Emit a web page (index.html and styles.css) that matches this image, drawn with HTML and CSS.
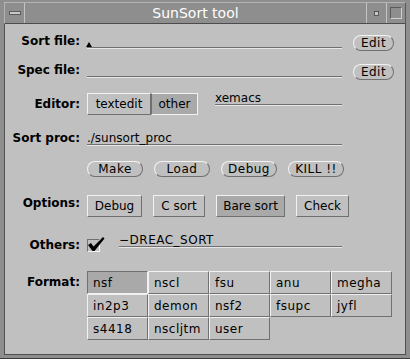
FILE: index.html
```html
<!DOCTYPE html>
<html lang="en">
<head>
    <meta charset="UTF-8">
    <title>SunSort tool</title>
    <link rel="stylesheet" href="styles.css">
</head>
<body>
    <div class="window">
        <!-- Titelleiste -->
        <div class="titlebar">
            <div class="tb-menu"><span class="tb-menu-bar"></span></div>
            <div class="tb-title">SunSort tool</div>
            <div class="tb-min"><span class="tb-min-dot"></span></div>
            <div class="tb-max"><span class="tb-max-box"></span></div>
        </div>

        <div class="panel">
            <div class="row row-sortfile">
                <div class="label">Sort file:</div>
                <div class="field field-wide"><span class="caret"></span></div>
                <button class="pill pill-edit">Edit</button>
            </div>

            <div class="row row-specfile">
                <div class="label">Spec file:</div>
                <div class="field field-wide"></div>
                <button class="pill pill-edit">Edit</button>
            </div>

            <div class="row row-editor">
                <div class="label">Editor:</div>
                <div class="segmented">
                    <button class="seg seg-textedit">textedit</button>
                    <button class="seg seg-other active">other</button>
                </div>
                <div class="field field-editor">xemacs</div>
            </div>

            <div class="row row-sortproc">
                <div class="label">Sort proc:</div>
                <div class="field field-wide">./sunsort_proc</div>
            </div>

            <div class="row row-actions">
                <div class="label"></div>
                <button class="pill pill-action">Make</button>
                <button class="pill pill-action">Load</button>
                <button class="pill pill-action">Debug</button>
                <button class="pill pill-action">KILL !!</button>
            </div>

            <div class="row row-options">
                <div class="label">Options:</div>
                <button class="toggle" style="width: 55px">Debug</button>
                <button class="toggle" style="width: 52px">C sort</button>
                <button class="toggle active" style="width: 69px">Bare sort</button>
                <button class="toggle" style="width: 53px">Check</button>
            </div>

            <div class="row row-others">
                <div class="label">Others:</div>
                <div class="checkbox">
                    <svg class="checkmark" width="17" height="15" viewBox="0 0 17 15">
                        <polygon points="0,8 3,6 5.5,9.5 15,0 16.5,1.5 6.5,14 4.5,14" fill="#000"/>
                    </svg>
                </div>
                <div class="field field-others">&minus;DREAC_SORT</div>
            </div>

            <div class="row row-format">
                <div class="label">Format:</div>
                <div class="format-grid">
                    <button class="cell active">nsf</button>
                    <button class="cell">nscl</button>
                    <button class="cell">fsu</button>
                    <button class="cell">anu</button>
                    <button class="cell">megha</button>
                    <button class="cell">in2p3</button>
                    <button class="cell">demon</button>
                    <button class="cell">nsf2</button>
                    <button class="cell">fsupc</button>
                    <button class="cell">jyfl</button>
                    <button class="cell">s4418</button>
                    <button class="cell">nscljtm</button>
                    <button class="cell">user</button>
                </div>
            </div>
        </div>
    </div>
</body>
</html>
```

FILE: styles.css
```css
/* Grunddesign */
body {
    margin: 0;
    padding: 0;
    font-family: "DejaVu Sans", sans-serif;
    font-size: 12px;
    color: #000;
    background-color: #c0c0c0;
}

button {
    font-family: inherit;
    font-size: 12px;
    color: #000;
    padding: 0;
    margin: 0;
    background: transparent;
    cursor: pointer;
}

/* Fensterrahmen */
.window {
    width: 410px;
    height: 359px;
    box-sizing: border-box;
    display: flex;
    flex-direction: column;
    background-color: #8e8e8e;
    padding: 2px 4px 3px 4px;
    border-bottom: 1px solid #3c3c3c;
}

/* Titelleiste */
.titlebar {
    height: 20px;
    display: flex;
    border: 1px solid #5a5a5a;
    border-bottom-color: #4c4c4c;
    border-top-color: #b4b4b4;
    border-left-color: #b4b4b4;
    background-color: #8e8e8e;
}

.tb-menu,
.tb-min,
.tb-max {
    display: flex;
    align-items: center;
    justify-content: center;
}

.tb-menu {
    width: 19px;
    border-right: 1px solid #c4c4c4;
}

.tb-menu-bar {
    width: 10px;
    height: 2px;
    background-color: #c8c8c8;
    border: 1px solid #5a5a5a;
}

.tb-title {
    flex: 1;
    text-align: center;
    color: #ffffff;
    font-size: 14px;
    line-height: 20px;
}

.tb-min {
    width: 19px;
    border-left: 1px solid #c4c4c4;
}

.tb-min-dot {
    width: 3px;
    height: 3px;
    background-color: #c8c8c8;
    border: 1px solid #5a5a5a;
    border-top-color: #505050;
}

.tb-max {
    width: 18px;
    border-left: 1px solid #c4c4c4;
}

.tb-max-box {
    width: 10px;
    height: 10px;
    border: 1px solid #5a5a5a;
    border-right-color: #d0d0d0;
    border-bottom-color: #d0d0d0;
}

/* Inhalt */
.panel {
    flex: 1;
    background-color: #c0c0c0;
    border-left: 1px solid #505050;
    border-right: 1px solid #505050;
    border-bottom: 1px solid #505050;
    padding-top: 9px;
}

.row {
    display: flex;
    align-items: flex-start;
}

.label {
    width: 75px;
    margin-right: 7px;
    text-align: right;
    font-weight: bold;
    line-height: 14px;
    flex-shrink: 0;
}

/* Textfelder */
.field {
    position: relative;
    height: 13px;
    line-height: 14px;
    border-bottom: 1px solid #707070;
    box-shadow: 0 1px 0 #e6e6e6;
    white-space: nowrap;
}

.field-wide {
    width: 255px;
}

.caret {
    position: absolute;
    left: -1px;
    top: 8px;
    width: 0;
    height: 0;
    border-left: 3px solid transparent;
    border-right: 3px solid transparent;
    border-bottom: 5px solid #000;
}

/* Runde Knöpfe */
.pill {
    height: 16px;
    line-height: 14px;
    border: 1px solid #f2f2f2;
    border-right-color: #707070;
    border-bottom-color: #707070;
    border-radius: 8px;
    text-align: center;
    letter-spacing: 0.5px;
}

.pill-edit {
    width: 41px;
    margin-left: 11px;
}

.pill-action {
    width: 56px;
    margin-right: 11px;
}

/* Umschalter */
.toggle,
.seg {
    height: 22px;
    line-height: 20px;
    border: 1px solid #f2f2f2;
    border-right-color: #707070;
    border-bottom-color: #707070;
    text-align: center;
    margin-right: 11px;
}

.toggle.active,
.seg.active,
.cell.active {
    background-color: #a9a9a9;
}

.segmented {
    display: flex;
}

.seg {
    margin-right: 0;
}

.seg-textedit {
    width: 64px;
}

.seg-other {
    width: 47px;
    border-left-color: #707070;
    border-right-color: #f2f2f2;
    border-top-color: #f2f2f2;
    border-bottom-color: #f2f2f2;
}

/* Zeilenabstände */
.row-sortfile { height: 29px; }
.row-sortfile .label,
.row-sortfile .field { margin-top: 1px; }
.row-sortfile .pill { margin-top: 2px; }

.row-specfile { height: 31px; }
.row-specfile .label,
.row-specfile .field { margin-top: 1px; }
.row-specfile .pill { margin-top: 2px; }

.row-editor { height: 37px; }
.row-editor .label { margin-top: 4px; }

.field-editor {
    width: 127px;
    margin-left: 17px;
    margin-top: -2px;
}

.row-sortproc { height: 31px; }
.row-sortproc .label,
.row-sortproc .field { margin-top: 1px; }

.row-actions { height: 34px; }

.row-options { height: 38px; }
.row-options .label { margin-top: 1px; }

.row-others { height: 38px; }
.row-others .label { margin-top: 5px; }

.checkbox {
    position: relative;
    width: 11px;
    height: 11px;
    margin-top: 6px;
    border: 1px solid #707070;
    border-right-color: #f2f2f2;
    border-bottom-color: #f2f2f2;
}

.checkmark {
    position: absolute;
    left: 0;
    top: -3px;
}

.field-others {
    width: 223px;
    margin-left: 19px;
    letter-spacing: 0.5px;
}

/* Formate */
.row-format .label { margin-top: 4px; }

.format-grid {
    display: grid;
    grid-template-columns: repeat(5, 61px);
    grid-auto-rows: 23px;
}

.cell {
    text-align: left;
    padding-left: 5px;
    border: 1px solid #f2f2f2;
    border-right-color: #707070;
    border-bottom-color: #707070;
    letter-spacing: 0.5px;
}

.cell.active {
    border-top-color: #707070;
    border-left-color: #707070;
    border-right-color: #f2f2f2;
    border-bottom-color: #f2f2f2;
}
```
